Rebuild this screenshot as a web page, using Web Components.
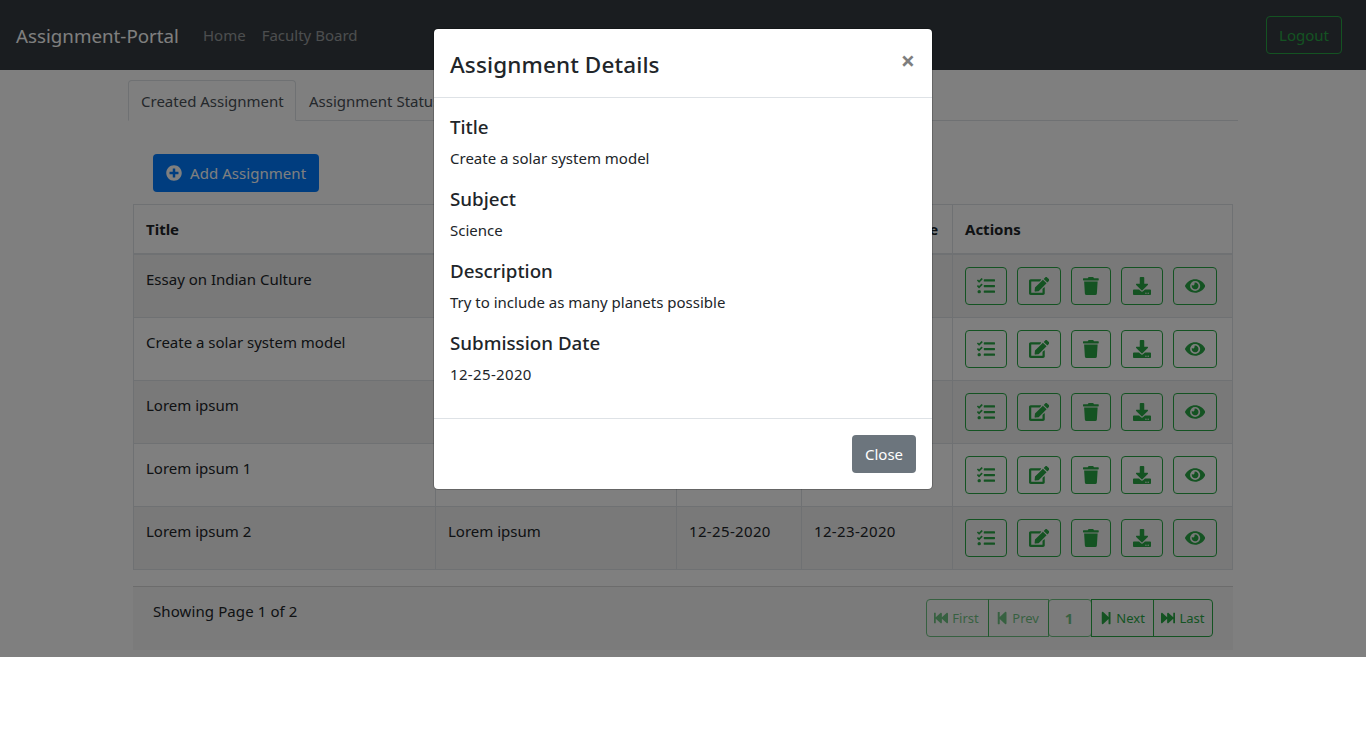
<!DOCTYPE html>
<html lang="en">
<head>
<meta charset="utf-8">
<title>Assignment-Portal</title>
<style>
  html, body { margin: 0; background: #fff; }
  body { font: 15px/24px "Noto Sans", "Open Sans", sans-serif; color: #212529; }
</style>
</head>
<body>
<app-navbar brand="Assignment-Portal">
  <nav-link>Home</nav-link>
  <nav-link>Faculty Board</nav-link>
</app-navbar>
<app-page>
  <tab-bar>
    <tab-item active>Created Assignment</tab-item>
    <tab-item>Assignment Status</tab-item>
  </tab-bar>
  <add-button>Add Assignment</add-button>
  <assignment-table></assignment-table>
  <table-footer>Showing Page 1 of 2</table-footer>
</app-page>
<detail-modal heading="Assignment Details">
  <detail-field label="Title">Create a solar system model</detail-field>
  <detail-field label="Subject">Science</detail-field>
  <detail-field label="Description">Try to include as many planets possible</detail-field>
  <detail-field label="Submission Date" digits>12-25-2020</detail-field>
</detail-modal>
<script>
// ============================================================================
// Icons
// ============================================================================
const ICONS = {
  tasks: [512, 'M139.61 35.5a12 12 0 0 0-17 0L58.93 98.81l-22.7-22.12a12 12 0 0 0-17 0L3.53 92.41a12 12 0 0 0 0 17l47.59 47.4a12.78 12.78 0 0 0 17.61 0l15.59-15.62L156.52 69a12.09 12.09 0 0 0 .09-17zm0 159.19a12 12 0 0 0-17 0l-63.68 63.72-22.7-22.1a12 12 0 0 0-17 0L3.53 252a12 12 0 0 0 0 17L51 316.5a12.77 12.77 0 0 0 17.6 0l15.7-15.69 72.2-72.22a12 12 0 0 0 .09-16.9zM64 368c-26.49 0-48.59 21.5-48.59 48S37.53 464 64 464a48 48 0 0 0 0-96zm432 16H208a16 16 0 0 0-16 16v32a16 16 0 0 0 16 16h288a16 16 0 0 0 16-16v-32a16 16 0 0 0-16-16zm0-320H208a16 16 0 0 0-16 16v32a16 16 0 0 0 16 16h288a16 16 0 0 0 16-16V80a16 16 0 0 0-16-16zm0 160H208a16 16 0 0 0-16 16v32a16 16 0 0 0 16 16h288a16 16 0 0 0 16-16v-32a16 16 0 0 0-16-16z'],
  edit: [576, 'M402.6 83.2l90.2 90.2c3.8 3.8 3.8 10 0 13.8L274.4 405.6l-92.8 10.3c-12.4 1.4-22.9-9.1-21.5-21.5l10.3-92.8L388.8 83.2c3.8-3.8 10-3.8 13.8 0zm162-22.9l-48.8-48.8c-15.2-15.2-39.9-15.2-55.2 0l-35.4 35.4c-3.8 3.8-3.8 10 0 13.8l90.2 90.2c3.8 3.8 10 3.8 13.8 0l35.4-35.4c15.2-15.3 15.2-40 0-55.2zM384 346.2V448H64V128h229.8c3.2 0 6.2-1.3 8.5-3.5l40-40c7.6-7.6 2.2-20.5-8.5-20.5H48C21.5 64 0 85.5 0 112v352c0 26.5 21.5 48 48 48h352c26.5 0 48-21.5 48-48V306.2c0-10.7-12.9-16-20.5-8.5l-40 40c-2.2 2.3-3.5 5.3-3.5 8.5z'],
  trash: [448, 'M432 32H312l-9.4-18.7A24 24 0 0 0 281.1 0H166.8a23.72 23.72 0 0 0-21.4 13.3L136 32H16A16 16 0 0 0 0 48v32a16 16 0 0 0 16 16h416a16 16 0 0 0 16-16V48a16 16 0 0 0-16-16zM53.2 467a48 48 0 0 0 47.9 45h245.8a48 48 0 0 0 47.9-45L416 128H32z'],
  download: [512, 'M216 0h80c13.3 0 24 10.7 24 24v168h87.7c17.8 0 26.7 21.5 14.1 34.1L269.7 378.3c-7.5 7.5-19.8 7.5-27.3 0L90.1 226.1c-12.6-12.6-3.7-34.1 14.1-34.1H192V24c0-13.3 10.7-24 24-24zm296 376v112c0 13.3-10.7 24-24 24H24c-13.3 0-24-10.7-24-24V376c0-13.3 10.7-24 24-24h146.7l49 49c20.1 20.1 52.5 20.1 72.6 0l49-49H488c13.3 0 24 10.7 24 24zm-124 88c0-11-9-20-20-20s-20 9-20 20 9 20 20 20 20-9 20-20zm64 0c0-11-9-20-20-20s-20 9-20 20 9 20 20 20 20-9 20-20z'],
  eye: [576, 'M572.52 241.4C518.29 135.59 410.93 64 288 64S57.68 135.64 3.48 241.41a32.35 32.35 0 0 0 0 29.19C57.71 376.41 165.07 448 288 448s230.32-71.64 284.52-177.41a32.35 32.35 0 0 0 0-29.19zM288 400a144 144 0 1 1 144-144 143.93 143.93 0 0 1-144 144zm0-240a95.31 95.31 0 0 0-25.31 3.79 47.85 47.85 0 0 1-66.9 66.9A95.78 95.78 0 1 0 288 160z'],
  plus: [512, 'M256 8C119 8 8 119 8 256s111 248 248 248 248-111 248-248S393 8 256 8zm144 276c0 6.6-5.4 12-12 12h-92v92c0 6.6-5.4 12-12 12h-56c-6.6 0-12-5.4-12-12v-92h-92c-6.6 0-12-5.4-12-12v-56c0-6.6 5.4-12 12-12h92v-92c0-6.6 5.4-12 12-12h56c6.6 0 12 5.4 12 12v92h92c6.6 0 12 5.4 12 12v56z'],
  first: [512, 'M0 436V76c0-6.6 5.4-12 12-12h40c6.6 0 12 5.4 12 12v151.9L235.5 71.4C256.1 54.3 288 68.6 288 96v131.9L459.5 71.4C480.1 54.3 512 68.6 512 96v320c0 27.4-31.9 41.7-52.5 24.6L288 285.3V416c0 27.4-31.9 41.7-52.5 24.6L64 285.3V436c0 6.6-5.4 12-12 12H12c-6.6 0-12-5.4-12-12z'],
  prev: [448, 'M64 468V44c0-6.6 5.4-12 12-12h48c6.6 0 12 5.4 12 12v176.4l195.5-181C352.1 22.3 384 36.6 384 64v384c0 27.4-31.9 41.7-52.5 24.6L136 292.7V468c0 6.6-5.4 12-12 12H76c-6.6 0-12-5.4-12-12z'],
  next: [448, 'M384 44v424c0 6.6-5.4 12-12 12h-48c-6.6 0-12-5.4-12-12V291.6l-195.5 181C95.9 489.7 64 475.4 64 448V64c0-27.4 31.9-41.7 52.5-24.6L312 219.3V44c0-6.6 5.4-12 12-12h48c6.6 0 12 5.4 12 12z'],
  last: [512, 'M512 76v360c0 6.6-5.4 12-12 12h-40c-6.6 0-12-5.4-12-12V284.1L276.5 440.6c-20.6 17.2-52.5 2.8-52.5-24.6V284.1L52.5 440.6C31.9 457.8 0 443.4 0 416V96c0-27.4 31.9-41.7 52.5-24.6L224 226.8V96c0-27.4 31.9-41.7 52.5-24.6L448 226.8V76c0-6.6 5.4-12 12-12h40c6.6 0 12 5.4 12 12z'],
};
function icon(name, size) {
  const [w, d] = ICONS[name];
  return `<svg xmlns="http://www.w3.org/2000/svg" viewBox="0 0 ${w} 512" width="${size * w / 512}" height="${size}" fill="currentColor" style="display:block;flex:none"><path d="${d}"/></svg>`;
}
// ============================================================================
// Navbar
// ============================================================================
class AppNavbar extends HTMLElement {
  connectedCallback() {
    const shadow = this.attachShadow({ mode: 'open' });
    shadow.innerHTML = `
      <style>
        :host { display: flex; align-items: center; height: 70px; box-sizing: border-box; padding: 0 24px 0 16px; background: #343a40; }
        .brand { font-size: 18.75px; line-height: 30px; color: #fff; margin-right: 16px; margin-top: 1px; }
        .links { display: flex; flex: 1; }
        .logout { box-sizing: border-box; width: 76px; height: 38px; display: flex; align-items: center; justify-content: center; color: #28a745; border: 1px solid #28a745; border-radius: 4px; }
      </style>
      <span class="brand">${this.getAttribute('brand')}</span>
      <div class="links"><slot></slot></div>
      <span class="logout">Logout</span>`;
  }
}
class NavLink extends HTMLElement {
  connectedCallback() {
    this.attachShadow({ mode: 'open' }).innerHTML = `
      <style>:host { display: block; padding: 0 8px; color: rgba(255,255,255,.5); }</style><slot></slot>`;
  }
}
// ============================================================================
// Page body
// ============================================================================
class AppPage extends HTMLElement {
  connectedCallback() {
    this.attachShadow({ mode: 'open' }).innerHTML = `
      <style>:host { display: block; width: 1110px; margin: 0 auto; padding-top: 10px; }</style><slot></slot>`;
  }
}
class TabBar extends HTMLElement {
  connectedCallback() {
    this.attachShadow({ mode: 'open' }).innerHTML = `
      <style>:host { display: flex; height: 41px; box-sizing: border-box; border-bottom: 1px solid #dee2e6; }</style><slot></slot>`;
  }
}
class TabItem extends HTMLElement {
  connectedCallback() {
    this.attachShadow({ mode: 'open' }).innerHTML = `
      <style>
        :host { display: block; box-sizing: border-box; height: 41px; padding: 8px 12px; border: 1px solid transparent; border-radius: 4px 4px 0 0; color: #495057; white-space: nowrap; }
        :host([active]) { width: 168px; border-color: #dee2e6 #dee2e6 #fff; background: #fff; }
      </style><slot></slot>`;
  }
}
class AddButton extends HTMLElement {
  connectedCallback() {
    this.attachShadow({ mode: 'open' }).innerHTML = `
      <style>
        :host { display: flex; align-items: center; gap: 8px; box-sizing: border-box; width: 166px; height: 38px; margin: 33px 0 12px 25px; padding: 0 13px; color: #fff; background: #007bff; border-radius: 4px; white-space: nowrap; letter-spacing: .05px; }
      </style>${icon('plus', 16)}<slot></slot>`;
  }
}
// ============================================================================
// Assignment table
// ============================================================================
const ROWS = [
  { title: 'Essay on Indian Culture' },
  { title: 'Create a solar system model' },
  { title: 'Lorem ipsum' },
  { title: 'Lorem ipsum 1' },
  { title: 'Lorem ipsum 2', subject: 'Lorem ipsum', due: '12-25-2020', created: '12-23-2020' },
];
class AssignmentTable extends HTMLElement {
  connectedCallback() {
    const actions = ['tasks', 'edit', 'trash', 'download', 'eye']
      .map((name) => `<span class="act">${icon(name, 18)}</span>`).join('');
    const rows = ROWS.map((r) => `
      <tr><td>${r.title}</td><td>${r.subject ?? ''}</td><td class="date">${r.due ?? ''}</td><td class="date">${r.created ?? ''}</td>
      <td><div class="acts">${actions}</div></td></tr>`).join('');
    this.attachShadow({ mode: 'open' }).innerHTML = `
      <style>
        :host { display: block; width: 1100px; margin-left: 5px; }
        table { width: 1100px; table-layout: fixed; border-collapse: collapse; }
        th, td { border: 1px solid #dee2e6; padding: 12px; text-align: left; vertical-align: top; height: 62px; box-sizing: border-box; white-space: nowrap; }
        th { height: 49px; border-bottom-width: 2px; font-weight: 700; }
        tbody tr:nth-child(odd) { background: rgba(0,0,0,.05); }
        .date { letter-spacing: .35px; }
        .tight { letter-spacing: -.3px; }
        .acts { display: flex; gap: 10px; }
        .act { display: flex; align-items: center; box-sizing: border-box; height: 38px; padding: 0 11px; color: #28a745; border: 1px solid #28a745; border-radius: 4px; }
      </style>
      <table>
        <colgroup><col style="width:302px"><col style="width:241px"><col style="width:125px"><col style="width:151px"><col></colgroup>
        <thead><tr><th>Title</th><th>Subject</th><th>Due Date</th><th class="tight">Assignment Date</th><th>Actions</th></tr></thead>
        <tbody>${rows}</tbody>
      </table>`;
  }
}
class TableFooter extends HTMLElement {
  connectedCallback() {
    const pages = [
      ['first', 'First', 63, true], ['prev', 'Prev', 61, true], [null, '1', 44, true],
      ['next', 'Next', 63, false], ['last', 'Last', 60, false],
    ].map(([name, text, w, off]) => `
      <span class="pg ${off ? 'off' : ''} ${name ? '' : 'num'}" style="width:${w}px">${name ? icon(name, 14) : ''}<span>${text}</span></span>`).join('');
    this.attachShadow({ mode: 'open' }).innerHTML = `
      <style>
        :host { display: flex; justify-content: space-between; box-sizing: border-box; width: 1100px; height: 64px; margin: 16px 0 0 5px; padding: 12px 20px; border-top: 1px solid rgba(0,0,0,.125); background: rgba(0,0,0,.03); }
        .label { letter-spacing: .1px; }
        .pager { display: flex; }
        .pg { display: flex; align-items: center; justify-content: center; gap: 4px; box-sizing: border-box; height: 38px; margin-left: -1px; font-size: 13px; color: #28a745; border: 1px solid #28a745; }
        .pg:first-child { border-radius: 4px 0 0 4px; margin-left: 0; }
        .pg:last-child { border-radius: 0 4px 4px 0; }
        .off { opacity: .65; padding-right: 2px; }
        .num { font-size: 15px; font-weight: 700; border-radius: 4px; }
      </style>
      <div class="label"><slot></slot></div>
      <div class="pager">${pages}</div>`;
  }
}
// ============================================================================
// Modal
// ============================================================================
class DetailModal extends HTMLElement {
  connectedCallback() {
    this.attachShadow({ mode: 'open' }).innerHTML = `
      <style>
        :host { position: absolute; left: 0; top: 0; width: 100%; height: 657px; background: rgba(0,0,0,.5); }
        .dialog { position: absolute; left: 433px; top: 28px; width: 500px; box-sizing: border-box; background: #fff; border: 1px solid rgba(0,0,0,.2); border-radius: 5px; background-clip: padding-box; }
        header { display: flex; justify-content: space-between; height: 69px; box-sizing: border-box; padding: 18px 16px 0; border-bottom: 1px solid #dee2e6; }
        h4 { margin: 0; font-size: 22.5px; line-height: 36px; font-weight: 500; letter-spacing: .12px; color: #212529; }
        .x { font-size: 25px; line-height: 24px; font-weight: 700; color: #000; opacity: .5; margin: 1px 1px 0 0; }
        .body { padding: 16px; }
        footer { display: flex; justify-content: flex-end; padding: 16px; border-top: 1px solid #dee2e6; }
        .close { display: flex; align-items: center; justify-content: center; box-sizing: border-box; width: 64px; height: 38px; color: #fff; background: #6c757d; border-radius: 4px; }
      </style>
      <div class="dialog">
        <header><h4>${this.getAttribute('heading')}</h4><span class="x">×</span></header>
        <div class="body"><slot></slot></div>
        <footer><span class="close">Close</span></footer>
      </div>`;
  }
}
class DetailField extends HTMLElement {
  connectedCallback() {
    this.attachShadow({ mode: 'open' }).innerHTML = `
      <style>
        :host { display: block; margin-bottom: 16px; }
        :host([digits]) { letter-spacing: .35px; }
        h5 { margin: 0 0 7px; padding-top: 1px; font-size: 18.75px; line-height: 24px; font-weight: 500; letter-spacing: 0; color: #212529; }
      </style>
      <h5>${this.getAttribute('label')}</h5><slot></slot>`;
  }
}
customElements.define('app-navbar', AppNavbar);
customElements.define('nav-link', NavLink);
customElements.define('app-page', AppPage);
customElements.define('tab-bar', TabBar);
customElements.define('tab-item', TabItem);
customElements.define('add-button', AddButton);
customElements.define('assignment-table', AssignmentTable);
customElements.define('table-footer', TableFooter);
customElements.define('detail-modal', DetailModal);
customElements.define('detail-field', DetailField);
</script>
</body>
</html>
